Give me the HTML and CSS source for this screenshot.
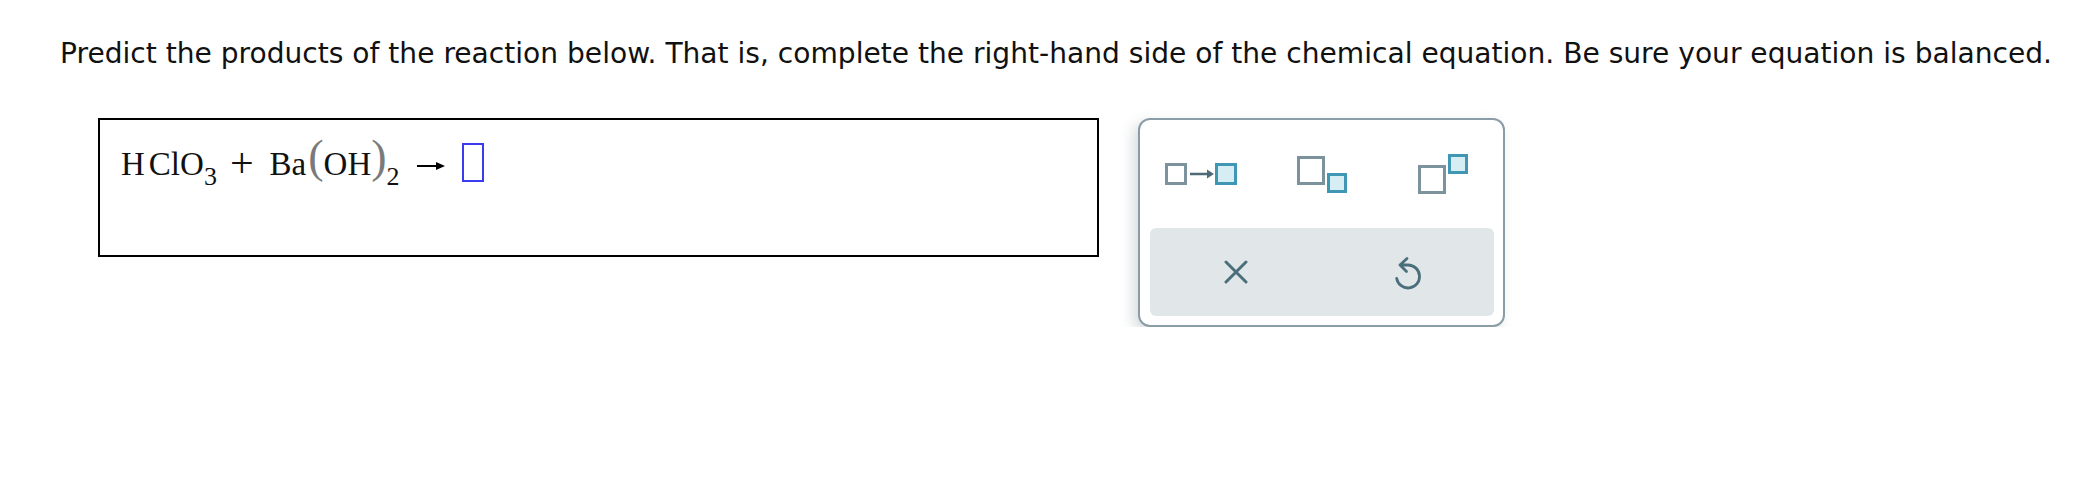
FILE: index.html
```html
<!DOCTYPE html>
<html lang="en">
<head>
<meta charset="utf-8">
<title>Predict the products</title>
<link rel="stylesheet" href="styles.css">
</head>
<body>
<div class="page">
  <p class="prompt">Predict the products of the reaction below. That is, complete the right-hand side of the chemical equation. Be sure your equation is balanced.</p>
  <div class="workspace">
    <div class="answer">
      <div class="eq"><span class="el">H</span><span class="el cl">Cl</span><span class="el">O</span><span class="sub">3</span><span class="op">+</span><span class="el">Ba</span><span class="paren open">(</span><span class="el">OH</span><span class="paren">)</span><span class="sub">2</span><svg class="arrow" width="28" height="10" viewBox="0 0 28 10"><line x1="0" y1="5" x2="21" y2="5" stroke="#000" stroke-width="2"/><polygon points="19,1 28,5 19,9" fill="#000"/></svg><span class="slot"></span></div>
    </div>
    <div class="palette">
      <div class="tools">
        <button class="tool" type="button" aria-label="Arrow">
          <svg width="72" height="22" viewBox="0 0 72 22">
            <rect x="1.5" y="1.5" width="19" height="19" fill="#fff" stroke="#7c929c" stroke-width="3"/>
            <line x1="25" y1="11" x2="44" y2="11" stroke="#4d6a76" stroke-width="2.5"/>
            <polygon points="42,6.5 49,11 42,15.5" fill="#4d6a76"/>
            <rect x="51.5" y="1.5" width="19" height="19" fill="#d5edf3" stroke="#3f97b4" stroke-width="3"/>
          </svg>
        </button>
        <button class="tool" type="button" aria-label="Subscript">
          <svg width="50" height="37" viewBox="0 0 50 37">
            <rect x="1.5" y="1.5" width="25" height="26" fill="#fff" stroke="#7c929c" stroke-width="3"/>
            <rect x="31.5" y="18.5" width="17" height="17" fill="#d5edf3" stroke="#3f97b4" stroke-width="3"/>
          </svg>
        </button>
        <button class="tool" type="button" aria-label="Superscript">
          <svg width="50" height="40" viewBox="0 0 50 40">
            <rect x="1.5" y="12.5" width="25" height="26" fill="#fff" stroke="#7c929c" stroke-width="3"/>
            <rect x="31.5" y="1.5" width="17" height="17" fill="#d5edf3" stroke="#3f97b4" stroke-width="3"/>
          </svg>
        </button>
      </div>
      <div class="actions">
        <button class="action" type="button" aria-label="Clear">
          <svg width="24" height="24" viewBox="0 0 24 24">
            <path d="M2 2 L22 22 M22 2 L2 22" stroke="#4b6e7b" stroke-width="3" stroke-linecap="round" fill="none"/>
          </svg>
        </button>
        <button class="action" type="button" aria-label="Undo">
          <svg width="30" height="36" viewBox="0 0 30 36">
            <path d="M14 4.5 L7 11 L13.5 17.5 M7 11 H15 A11.5 11.5 0 1 1 3.7 24.5" stroke="#4b6e7b" stroke-width="2.8" stroke-linecap="round" stroke-linejoin="round" fill="none"/>
          </svg>
        </button>
      </div>
    </div>
  </div>
</div>
</body>
</html>
```

FILE: styles.css
```css
html, body {
  margin: 0;
  padding: 0;
  background: #fff;
}

.page {
  padding: 37px 0 0 60px;
}

.prompt {
  margin: 0;
  font-family: "DejaVu Sans", Verdana, sans-serif;
  font-size: 28.1px;
  line-height: 33px;
  color: #111;
  white-space: nowrap;
}

.workspace {
  display: flex;
  align-items: flex-start;
  gap: 39px;
  margin: 48px 0 0 38px;
}

.answer {
  width: 1001px;
  height: 139px;
  box-sizing: border-box;
  border: 2px solid #000;
  background: #fff;
}

.eq {
  padding: 23px 0 0 21px;
  font-family: "Liberation Serif", "Times New Roman", serif;
  font-size: 33px;
  line-height: 40px;
  color: #111;
  white-space: nowrap;
}

.cl {
  margin-left: 4px;
}

.sub {
  font-size: 26px;
  line-height: 0;
  vertical-align: -10px;
}

.op {
  font-size: 42px;
  line-height: 0;
  vertical-align: -2px;
  margin: 0 16px 0 13px;
}

.paren {
  font-size: 46px;
  line-height: 0;
  color: #7a7a7a;
  vertical-align: 3px;
}

.paren.open {
  margin-left: 2px;
}

.arrow {
  vertical-align: 4px;
  margin: 0 17px 0 17px;
}

.slot {
  display: inline-block;
  width: 22px;
  height: 39px;
  box-sizing: border-box;
  border: 2px solid #3a3af0;
  vertical-align: -7px;
}

.palette {
  width: 367px;
  height: 209px;
  box-sizing: border-box;
  border: 2px solid #8a9ca6;
  border-radius: 12px;
  background: #fff;
  box-shadow: -5px 5px 14px rgba(60, 80, 90, 0.2);
  display: flex;
  flex-direction: column;
}

.tools {
  height: 108px;
  display: grid;
  grid-template-columns: repeat(3, 1fr);
  align-items: center;
  justify-items: center;
}

.tool,
.action {
  border: 0;
  background: none;
  padding: 0;
  margin: 0;
  display: flex;
  align-items: center;
  justify-content: center;
  cursor: pointer;
}

.tool svg,
.action svg {
  display: block;
}

.actions {
  flex: 1;
  margin: 0 9px 9px 10px;
  background: #e1e6e9;
  border-radius: 6px;
  display: grid;
  grid-template-columns: 1fr 1fr;
  align-items: center;
  justify-items: center;
}
```
